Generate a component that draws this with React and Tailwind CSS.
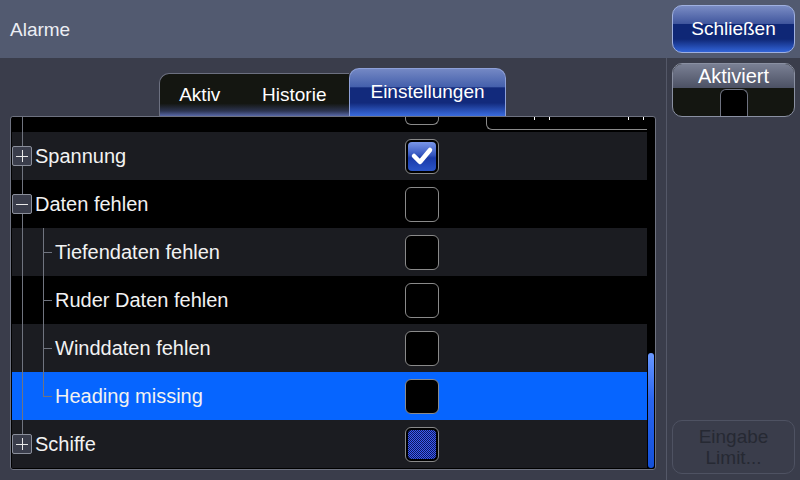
import React from 'react';

const rows = [
  { label: 'Spannung', type: 'plus', bg: 'bg-[#1b1c21]', check: 'checked' },
  { label: 'Daten fehlen', type: 'minus', bg: 'bg-black', check: 'empty' },
  { label: 'Tiefendaten fehlen', type: 'child', bg: 'bg-[#1b1c21]', check: 'empty' },
  { label: 'Ruder Daten fehlen', type: 'child', bg: 'bg-black', check: 'empty' },
  { label: 'Winddaten fehlen', type: 'child', bg: 'bg-[#1b1c21]', check: 'empty' },
  { label: 'Heading missing', type: 'lastChild', bg: 'bg-[#0665ff]', check: 'empty' },
  { label: 'Schiffe', type: 'plusLast', bg: 'bg-[#1b1c21]', check: 'dither' },
];

const ExpandBox = ({ open }) => (
  <div className="relative z-10 w-[20px] h-[20px] rounded-[2px] border border-[#8a8e9a] bg-[#3a3d4b] flex items-center justify-center">
    <div className="absolute w-[12px] h-px bg-[#e8e8e8]" />
    {!open && <div className="absolute w-px h-[12px] bg-[#e8e8e8]" />}
  </div>
);

const Checkbox = ({ state }) => (
  <div className="w-[34px] h-[35px] rounded-[6px] border border-[#8a8a8a] bg-black p-[2px]">
    {state === 'checked' && (
      <div className="w-full h-full rounded-[4px] bg-[linear-gradient(to_bottom,#7a96e8_0%,#3556c0_45%,#1a3aa8_55%,#2b55c8_100%)] flex items-center justify-center">
        <svg width="24" height="22" viewBox="0 0 24 22">
          <path d="M4 11 L10 17 L20 5" fill="none" stroke="#ffffff" strokeWidth="4.5" strokeLinecap="round" strokeLinejoin="round" />
        </svg>
      </div>
    )}
    {state === 'dither' && (
      <div className="w-full h-full rounded-[4px] bg-[repeating-conic-gradient(#3d5cf0_0%_25%,#0c1660_0%_50%)] bg-[length:2px_2px]" />
    )}
  </div>
);

const Row = ({ row }) => {
  const child = row.type === 'child' || row.type === 'lastChild';
  return (
    <div className={`relative h-[48px] flex items-center ${row.bg}`}>
      {/* tree connectors */}
      <div className={`absolute left-[10px] top-0 w-px bg-[#70747f] ${row.type === 'plusLast' ? 'h-[15px]' : 'h-full'}`} />
      {child && (
        <>
          <div className={`absolute left-[31px] top-0 w-px bg-[#70747f] ${row.type === 'lastChild' ? 'h-[24px]' : 'h-full'}`} />
          <div className="absolute left-[31px] top-[24px] w-[9px] h-px bg-[#70747f]" />
        </>
      )}
      <div className="w-[393px] flex items-center">
        {child ? (
          <span className="pl-[43px] text-[20px] text-[#f2f2f2] leading-none">{row.label}</span>
        ) : (
          <>
            <ExpandBox open={row.type === 'minus'} />
            <span className="ml-[3px] text-[20px] text-[#f2f2f2] leading-none">{row.label}</span>
          </>
        )}
      </div>
      <Checkbox state={row.check} />
    </div>
  );
};

export default function App() {
  return (
    <div className="w-[800px] h-[480px] flex flex-col bg-[#3a3d4b] font-['Liberation_Sans',Arial,sans-serif] overflow-hidden">

      {/* Header */}
      <div className="h-[58px] flex items-center justify-between bg-[#525a70] pl-[10px] pr-[5px]">
        <span className="text-[19px] text-[#eceef4] pt-[2px]">Alarme</span>
        <button className="w-[123px] h-[48px] rounded-[10px] border border-[#9fb0e0] bg-[linear-gradient(to_bottom,#7a8cc4_0%,#41579e_38%,#0f2776_40%,#0f2776_72%,#3264d8_100%)] text-[19px] text-white">
          Schließen
        </button>
      </div>

      {/* Body */}
      <div className="flex-1 flex">

        {/* Left content */}
        <div className="w-[666px] flex flex-col pt-[10px]">
          <div className="h-[48px] flex items-end pl-[159px]">
            <div className="w-[190px] h-[43px] rounded-tl-[10px] border-t border-l border-[#6c7080] bg-[linear-gradient(to_bottom,#141611_0%,#141611_70%,#2c3450_88%,#5868a8_100%)] flex items-center text-[19px] text-white">
              <span className="w-[80px] text-center">Aktiv</span>
              <span className="w-[110px] text-center">Historie</span>
            </div>
            <div className="w-[157px] h-[48px] rounded-t-[10px] border-t border-x border-[#8ea0d8] bg-[linear-gradient(to_bottom,#7488c4_0%,#4460ac_38%,#122a7c_40%,#122a7c_72%,#3a6ce0_100%)] flex items-center justify-center text-[19px] text-white">
              Einstellungen
            </div>
          </div>

          {/* List panel */}
          <div className="ml-[10px] w-[646px] h-[354px] border border-[#6e7280] rounded-[3px] bg-black flex overflow-hidden">
            <div className="w-[636px] pl-px flex flex-col">
              {/* partially scrolled row */}
              <div className="relative h-[15px] flex items-start bg-black">
                <div className="absolute left-[10px] top-0 w-px h-full bg-[#70747f]" />
                <div className="ml-[393px] w-[34px] h-[8px] border border-t-0 border-[#8a8a8a] rounded-b-[6px]" />
                <div className="ml-[47px] flex-1 h-[13px] border-l border-b border-[#8a8a8a] rounded-bl-[6px] flex items-start">
                  <div className="ml-[47px] w-px h-[3px] bg-white" />
                  <div className="ml-[14px] w-px h-[3px] bg-white" />
                  <div className="ml-[78px] w-px h-[3px] bg-white" />
                  <div className="ml-[14px] w-px h-[3px] bg-white" />
                </div>
              </div>
              {rows.map((row) => (
                <Row key={row.label} row={row} />
              ))}
            </div>
            {/* Scrollbar */}
            <div className="flex-1 flex flex-col justify-end pb-px pl-px">
              <div className="w-[6px] h-[115px] rounded-full bg-[linear-gradient(to_bottom,#6a98ff,#2a66f0_40%,#1450d8)]" />
            </div>
          </div>
        </div>

        {/* Right sidebar */}
        <div className="flex-1 border-l border-[#545868] pl-[5px] pt-[5px] pb-[6px] flex flex-col justify-between">
          <div className="w-[123px] h-[54px] rounded-[10px] border border-[#8a90a2] overflow-hidden flex flex-col bg-[#141611]">
            <div className="h-[24px] bg-[linear-gradient(to_bottom,#7a8094,#4c5164)] flex items-center justify-center text-[20px] text-white">
              Aktiviert
            </div>
            <div className="flex-1 flex items-end justify-center">
              <div className="w-[28px] h-[27px] rounded-t-[6px] border border-b-0 border-[#6e7280] bg-black" />
            </div>
          </div>
          <div className="w-[123px] h-[54px] rounded-[10px] border border-[#4e5262] flex flex-col items-center justify-center text-[19px] leading-[21px] text-[#262933]">
            <span>Eingabe</span>
            <span>Limit...</span>
          </div>
        </div>
      </div>
    </div>
  );
}
